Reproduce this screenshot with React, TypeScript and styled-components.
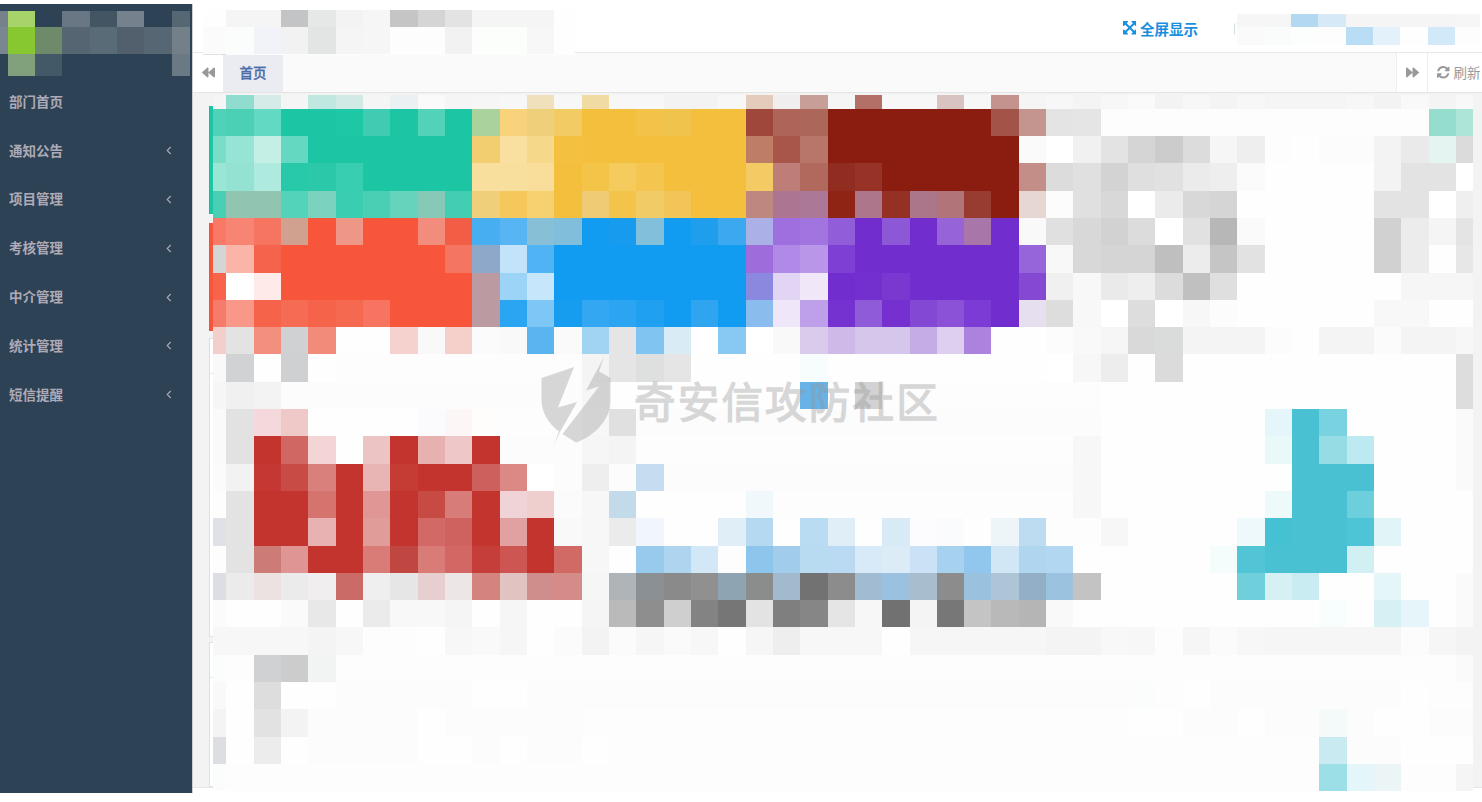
import React from "react";
import styled, { createGlobalStyle } from "styled-components";
import { FaBackward, FaForward } from "react-icons/fa";

const GlobalStyle = createGlobalStyle`
  * { box-sizing: border-box; }
  html, body { margin: 0; padding: 0; background: #fff; overflow: hidden; }
  body { font-family: "Noto Sans", "Noto Sans CJK SC", sans-serif; font-size: 13.5px; }
`;

const Page = styled.div`
  position: relative;
  display: flex;
  width: 1482px;
  height: 802px;
  padding: 4px 0 9px;
  overflow: hidden;
  background: #fff;
`;

const Sidebar = styled.aside`
  display: flex;
  flex-direction: column;
  flex: none;
  width: 192px;
  background: #2d4254;
`;

const Brand = styled.div`
  height: 74px;
  padding-top: 7px;
`;

const Menu = styled.nav`
  display: flex;
  flex-direction: column;
`;

const MenuItem = styled.a`
  display: flex;
  align-items: center;
  justify-content: space-between;
  height: 48.8px;
  padding: 0 20px 1px 9px;
  color: #aeaab8;
  font-weight: 700;
  line-height: 20px;
`;

const Main = styled.main`
  display: flex;
  flex-direction: column;
  flex: 1;
  min-width: 0;
  border-left: 1px solid #c9ced3;
`;

const TopBar = styled.header`
  display: flex;
  align-items: flex-start;
  justify-content: space-between;
  flex: none;
  height: 49px;
  padding: 6px 2px 0 10px;
  border-bottom: 1px solid #e6e8ea;
`;

const TopActions = styled.div`
  display: flex;
  align-items: flex-start;
  gap: 36px;
  padding-top: 4px;
`;

const FullScreen = styled.a`
  display: flex;
  align-items: center;
  gap: 4px;
  height: 29px;
  padding-bottom: 1px;
  color: #1b8fdf;
  font-size: 14.5px;
  font-weight: 700;
`;

const UserBox = styled.div`
  display: flex;
  align-items: center;
  &::before {
    content: "";
    width: 2px;
    height: 12px;
    margin-bottom: 2px;
    border-left: 1px solid #d3dfdf;
    border-radius: 2px 0 0 2px;
  }
`;

const TabBar = styled.div`
  display: flex;
  flex: none;
  height: 40px;
  background: #fafafa;
  border-bottom: 1px solid #e4e4e4;
  overflow: hidden;
`;

const TabButton = styled.button<{ $width: number; $line?: boolean }>`
  display: flex;
  align-items: center;
  justify-content: flex-start;
  gap: 4px;
  flex: none;
  width: ${(p) => p.$width}px;
  padding: 0 0 0 9px;
  border: 0;
  border-left: ${(p) => (p.$line ? "1px solid #eeeeee" : "0")};
  background: #fff;
  color: #999;
  font: inherit;
  font-size: 13.5px;
  white-space: nowrap;
`;

const ButtonLabel = styled.span`
  padding-bottom: 2px;
`;

const Tab = styled.div`
  display: flex;
  align-items: center;
  justify-content: center;
  width: 60px;
  padding-bottom: 2px;
  background: #eaecf1;
  color: #4a6ea9;
  font-weight: 500;
  -webkit-text-stroke: 0.3px #4a6ea9;
`;

const Spacer = styled.div`
  flex: 1;
`;

const Content = styled.section`
  position: relative;
  display: flex;
  flex-direction: column;
  flex: none;
  height: 695px;
  padding: 13px 9px 0 16px;
  background: #f3f3f3;
  border-bottom: 1px solid #e7e7e7;
`;

const StatStrip = styled.div<{ $color: string }>`
  flex: none;
  height: 108px;
  margin-bottom: 9px;
  background: ${(p) => p.$color};
  border-left: 1px solid rgba(120, 120, 120, 0.35);
`;

const Panel = styled.div<{ $height: number }>`
  flex: none;
  height: ${(p) => p.$height}px;
  margin-bottom: 7px;
  margin-top: -2px;
  background: #fff;
  border: 1px solid #dfdfdf;
`;

const PanelHead = styled.div`
  height: 35px;
  border-bottom: 1px solid #e7eaec;
`;

const ContentMosaic = styled.div`
  position: absolute;
  left: 20px;
  top: 2px;
`;

const Tiles = styled.div<{ $cols: string; $rows: string; $width: number }>`
  position: relative;
  display: grid;
  flex: none;
  width: ${(p) => p.$width}px;
  grid-template-columns: ${(p) => p.$cols};
  grid-template-rows: ${(p) => p.$rows};
`;

const Tile = styled.i<{ $span: number }>`
  grid-column: span ${(p) => p.$span};
`;

const Watermark = styled.div`
  position: absolute;
  left: 541px;
  top: 357px;
  display: flex;
  gap: 22px;
  color: #969696;
  opacity: 0.37;
`;

const WatermarkText = styled.span`
  padding-top: 13px;
  font-family: "Noto Sans CJK SC", sans-serif;
  font-size: 41.5px;
  font-weight: 400;
  line-height: 60px;
  letter-spacing: 2.2px;
  white-space: nowrap;
  -webkit-text-stroke: 1.3px #969696;
`;

/* Each row lists its tiles as "colour" or "colour*count"; two digits mean a grey. */
const toHex = (c: string) => "#" + (c.length === 2 ? c + c + c : c);

function Mosaic(props: { cols: string; rows: string; width: number; data: string[] }) {
  return (
    <Tiles $cols={props.cols} $rows={props.rows} $width={props.width}>
      {props.data.flatMap((row, r) =>
        row.split(" ").map((run, i) => {
          const [color, count] = run.split("*");
          return <Tile key={`${r}-${i}`} $span={Number(count || 1)} style={{ background: toHex(color) }} />;
        })
      )}
    </Tiles>
  );
}

const BRAND = [
  "76818c a7d36b 2d4254 687783 435563 75818c 2d4254 566774",
  "7b8790 87c730 6d8b6b 556571 5a6b78 525f6d 566773 73808a",
  "2d4254 80a17c 445967 2d4254*4 6b7984",
];

const TITLE = [
  "fe f5*2 c3c4c6 e6e8e7 f3 f6 c5 d5 e3 f5*3 fe",
  "fb fbfdfc f2f3f9 f2 e3e5e4 f5 f6 fd*2 f2 fcfefc*2 f7 fe",
  "e0e0e4 fd*13",
];

const USER = [
  "f6*2 b3d9f2 d5e9f7 f5*4 f6",
  "fa fafcfb fcfefd fd b9ddf4 e3f1fa fe d1e9f8 fd",
];

const DASHBOARD = [
  "f5 90dccf d5ebe7 f5 c0e8e0 d2eae6 f5 ebf1f2 fa f5 f6 f7 f0e1bc f7 f0dba3 f7*2 f3*2 f7 e3ccbc f0eeee c89f98 f5 b37066 f7*2 d9c3c0 f7 c4938d f5 f7 f4 f7 fa f3 f7 f4 f7 f5*3 f7 f3 f9 f4 f8",
  "50d2b8 4bd0b5 62d9c2 1cc6a5*2 1ec7a6 40ccb2 1cc6a5 53d1b9 1cc6a5 a9d29c f8d37b efd07a f2cb63 f4bf3c*2 f3c248 f0c34d f4bf3c*2 9f473a ae6458 ac665a 8a1d10*6 a35449 c4958e e4 e5 fd*12 95ddcd ade5d8",
  "7addc8 96e4d3 c3efe5 65d8c1 1cc6a5*6 f2ce71 f9dfa0 f6d88b f4c03f f4bf3c*6 bd7e65 a85649 b8766b 8a1d10*7 fa ff f1 e3 d5 cc dc f6 ee fd fe fc*2 f3 ea e4f4f0 db",
  "9ae6d5 94e3d2 aeeade 28c9aa 2bc8aa 38ceb2 1cc6a5*4 f9df9d*2 f9de9b f4bf3c f4c448 f5cb5e f4c650 f4bf3c*3 f3ca63 be7d76 b1695e 912d20 973227 8a1d10*5 c28e87 dc e0 d3 df e1 eb ee fb fe*4 f3 e3*2 ff",
  "48cfb4 92c4b2*2 52d3ba 7bd2bf 3acdb2 4aceb4 66d4bc 85c9b6 42ceb3 f0cf7b f4c85a f7d16f f4bf3c f0cb75 f4c44a f1cb66 f2c558 f4bf3c*2 be8780 ac7692 ac7897 8f2415 ad768a 953024 ab758a b17479 983b31 8a1d10 e7d7d3 fc e0 d8 ff eb d8 d5 fe*5 e3*2 ff ef",
  "fa7866 f88573 f57560 d1a190 f7563a ee9787 f7563a*2 f28d7d f15e45 47aef2 57b5f3 87bfd7 80bedb 119bf1 169bee 82bfdb 119bf1 1f9eee 3ba8ef abb0e6 9f6fdf a174e0 925dd9 722dcf 8c58d6 722dcf 9764d8 a876a9 722dcf f9 e0 d8 d2 dc ff e1 b7 fa fe*4 d1 ec f5 e4",
  "d5d5d7 fab4a8 f5634c f7563a*6 f47661 8ea8ca c2e3f9 50b3f4 119bf1*7 9f6ddb b18ae7 b996e7 7d3fd4 722dcf*6 9665da f8 d8 d5*2 bf ec c5 e2 fe*4 d1 ec fe e7",
  "f7634b ff feeae8 f7563a*7 bb9aa2 9cd4f8 c6e6fb 119bf1*7 8b88df e2d5f3 f0e8f8 722dcf 7430cf 7a38d1 722dcf*4 8448d2 f0 f8 ea ee dc c0 df fe*6 f6*3",
  "f57c6b f99788 f6634b f66b53 f6634b f66951 f77560 f7563a*3 bb9aa2 2aa5f1 7cc7f6 179df0 33a7f2 2ba4f1 20a0f0 119bf1 2fa5ef 119bf1 8abded efe7f9 be9fea 7632d1 8f5bd8 7630d0 8449d4 8b52d7 7c3bd4 722dcf e6dff0 dd f8 ff dd ff f7 fc fe*5 f8*2 fe*2",
  "f2cfcb e3 f28f7f d0d1d2 f28b7a fe*2 f5d2ce f9 f5cfca fb f9 59b4ef fa a1d3f3 e5 80c4f1 d9ebf5 ff 87c9f3 ff f9 dacbed cfb9e9 d5c6ec*2 c5ace7 decfef ab83df fe*2 fc f9 f6 d9 d9dcdb f4*3 fc fe f4*2 fb f4*2 f7",
  "f9 d1d2d3 fe cfd0d1 fe fd*9 f4 e5 dde0df e5 fe*4 f7fcfc fe*8 ff f7 ed fe db fe*10 dd",
  "f6 f0 f3 fc*11 f6 fe*7 67b3e8 fe d2 fd*8 fe*13 dd",
  "fa e2 f5d8db efc9c8 fe*4 fbfafc fcf6f7 fefdfc fd*3 f7 e0 fc*17 fe*6 e4f6fa 49c1d3 78d2df fe*4 fa",
  "fa e2 c3342f d16762 f4d4d4 fe edc4c4 c3342f e7b1af eec7c8 c3342f fc*3 f6 f4 fd*16 f7 fe*6 e9f8f8 49c1d3 95dce5 bde9f0 fe*3 fa",
  "fb f2 c43732 c94b45 d97f7c c3342f e8b4b4 c53c35 c3342f*2 cd605d dc8986 ff fc ee fc c6dcf0 fc*15 f7 fe*7 49c1d3*3 fe*3 fa",
  "fd e3 c3342f*2 d5736f c3342f df9694 c3342f c74a44 d87c79 c3342f f0d3d6 efcfce fb f7 c2daea fe*4 f1f8fb fd*11 f7 fe*6 eef9fa 49c1d3*2 6dcfdc fe*4",
  "e0e1e6 e3 c3342f*2 e8b2b2 c3342f e09c99 c3342f d26966 cf625f c3342f e1a1a0 c3342f f9 f7 eb f0f6fb fe*2 e0eef8 b5d9f1 fe badcf3 e0eef7 fe d9eaf7 fcfcff fafbfd fe edf5f9 bddcf2 fd*2 f7 fe*4 eef9fb 46c1d4 49c1d3*2 4fc4d6 e1f4f7 fe*3",
  "fd e3 cc7b77 df9593 c3342f*2 d97c78 bf4641 d97c78 d26763 c53e39 cd5653 c3342f d16964 f7 fe 98caee aed4ef d3e8f6 fd 8dc5ec a2ccec b8dbf2 badaf3 d8e9f8 dcecf6 cbe1f5 a6d2ef 92c7ed d2e7f6 b0d5ef b2d8f1 fe*5 f5fcfc 51c4d6 49c1d3*3 d2eff3 fe*4",
  "dcdee3 eb ede2e2 eb f0eeef ca6b68 ef e6 e7cfcf ece6e6 d3847f e1c3c1 cf8e8b d58c88 f6 aeb4b8 8b9094 8a 90 8fa4b2 8a8d8b a2bace 72 8c a0bbd2 9ac1df a8bdce 8c 9ac1de aec5d7 93afc7 9bc3e0 c3 fe*5 6fcfdb d7f0f4 c9ecf2 fe*2 e5f6f9 fe*2 fa",
  "fb fe*2 fa e8 fe eb f8*2 f5 fe f6 fe*2 f5 ba 8e cf 83 76 e3 7f 86 e5 f7 71 f4 77 c4 b9 b5 f9 fe*9 f8fdfd fe d7f0f3 e6f5fa fe fa",
  "f7*4 f4 f7 fd*2 fe f7 f9 f6 fe fb f3 fb f6 fa f7 fe f6 ee f7*3 fe f6*5 f4*2 f8 f7 fd f6 fb f7 f6*5 fc f6 f3",
  "fafdfb fd d0d1d3 cc f2f4f3 fd*41 fa",
  "f9 fe dd fe*2 fc*5 fe*2 fc*22 fafdfc fd fe fc*7 fe fd*2",
  "f4 fe e2 f3 fc*4 fe fc*5 fd*20 fe*2 fc*2 fe fc*2 f4f9f9 fc fe*2 fc*2",
  "dcdee2 fe ec fe fc*4 fe*2 fc fe fc*2 fe fd*26 c8eaf0 fc*2 fe*3",
  "fafdfb fd*40 9ddfe6 e5f6fa ebf5f6 fd*2 f5",
];

const MENU = [
  { label: "部门首页", sub: false },
  { label: "通知公告", sub: true },
  { label: "项目管理", sub: true },
  { label: "考核管理", sub: true },
  { label: "中介管理", sub: true },
  { label: "统计管理", sub: true },
  { label: "短信提醒", sub: true },
];

const AngleLeft = () => (
  <svg width="6" height="9" viewBox="0 0 6 9" fill="none" stroke="#aeaab8" strokeWidth="1.1">
    <path d="M4.7 1 1.2 4.500 4.700 8" />
  </svg>
);

const ArrowsOut = () => (
  <svg width="13.500" height="13.500" viewBox="0 0 1536 1536" fill="currentColor">
    <path
      transform="translate(0 1408) scale(1 -1)"
      d="M1283 995l-355 -355l355 -355l144 144q29 31 70 14q39 -17 39 -59v-448q0 -26 -19 -45t-45 -19h-448q-42 0 -59 40q-17 39 14 69l144 144l-355 355l-355 -355l144 -144q31 -30 14 -69q-17 -40 -59 -40h-448q-26 0 -45 19t-19 45v448q0 42 40 59q39 17 69 -14l144 -144l355 355l-355 355l-144 -144q-19 -19 -45 -19q-12 0 -24 5q-40 17 -40 59v448q0 26 19 45t45 19h448q42 0 59 -40q17 -39 -14 -69l-144 -144l355 -355l355 355l-144 144q-31 30 -14 69q17 40 59 40h448q26 0 45 -19t19 -45v-448q0 -42 -39 -59q-13 -5 -25 -5q-26 0 -45 19z"
    />
  </svg>
);

const Refresh = () => (
  <svg width="12.500" height="12.500" viewBox="0 0 1536 1536" fill="currentColor">
    <path
      transform="translate(0 1408) scale(1 -1)"
      d="M1511 480q0 -5 -1 -7q-64 -268 -268 -434.500t-478 -166.500q-146 0 -282.500 55t-243.500 157l-129 -129q-19 -19 -45 -19t-45 19t-19 45v448q0 26 19 45t45 19h448q26 0 45 -19t19 -45t-19 -45l-137 -137q71 -66 161 -102t187 -36q134 0 250 65t186 179q11 17 53 117q8 23 30 23h192q13 0 22.500 -9.500t9.500 -22.500zM1536 1280v-448q0 -26 -19 -45t-45 -19h-448q-26 0 -45 19t-19 45t19 45l138 138q-148 137 -349 137q-134 0 -250 -65t-186 -179q-11 -17 -53 -117q-8 -23 -30 -23h-199q-13 0 -22.500 9.500t-9.500 22.500v7q65 268 270 434.500t480 166.500q146 0 284 -55.500t245 -156.500l130 129q19 19 45 19t45 -19t19 -45z"
    />
  </svg>
);

const Shield = () => (
  <svg width="71" height="90" viewBox="0 0 71 90" fill="currentColor">
    <path d="M0.500 21 33 10 17 50.500 36 45 19 75 12.500 89 18 74.500C7 66 0.500 55 0.500 43Z" />
    <path d="M63 0 58 14.500 69.500 21V44C69.500 62 54 79 35 85.500L21.500 77 58 29.500 45 33.500Z" />
  </svg>
);

export default function App() {
  return (
    <Page>
      <GlobalStyle />
      <Sidebar>
        <Brand>
          <Mosaic width={190} cols="7.800px repeat(6, 27.330px) 1fr" rows="16px 27px 22px" data={BRAND} />
        </Brand>
        <Menu>
          {MENU.map((item) => (
            <MenuItem key={item.label}>
              {item.label}
              {item.sub && <AngleLeft />}
            </MenuItem>
          ))}
        </Menu>
      </Sidebar>
      <Main>
        <TopBar>
          <Mosaic width={372} cols="23.300px repeat(12, 27.330px) 1fr" rows="17px 27px 1px" data={TITLE} />
          <TopActions>
            <FullScreen>
              <ArrowsOut />
              全屏显示
            </FullScreen>
            <UserBox>
              <Mosaic width={243} cols="26.800px repeat(7, 27.300px) 1fr" rows="13px 18px" data={USER} />
            </UserBox>
          </TopActions>
        </TopBar>
        <TabBar>
          <TabButton $width={30}>
            <FaBackward size={13} />
          </TabButton>
          <Tab>首页</Tab>
          <Spacer />
          <TabButton $width={31} $line>
            <FaForward size={13} />
          </TabButton>
          <TabButton $width={55} $line>
            <Refresh />
            <ButtonLabel>刷新</ButtonLabel>
          </TabButton>
        </TabBar>
        <Content>
          <StatStrip $color="#1cc6a5" />
          <StatStrip $color="#f7563a" />
          <Panel $height={299}>
            <PanelHead />
          </Panel>
          <Panel $height={145}>
            <PanelHead />
          </Panel>
          <ContentMosaic>
            <Mosaic
              width={1260}
              cols="13.300px repeat(45, 27.330px) 1fr"
              rows="13.800px repeat(25, 27.310px)"
              data={DASHBOARD}
            />
          </ContentMosaic>
        </Content>
      </Main>
      <Watermark>
        <Shield />
        <WatermarkText>奇安信攻防社区</WatermarkText>
      </Watermark>
    </Page>
  );
}
